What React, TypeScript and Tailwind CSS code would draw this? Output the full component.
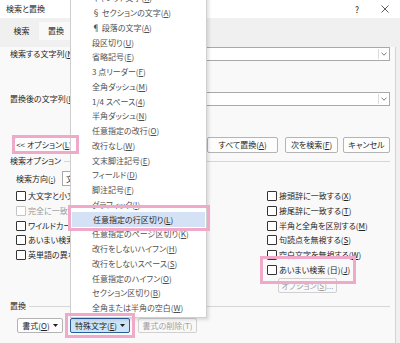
import React from "react";

type K = { t: string; k?: string; tail?: string };

const Lbl = ({ t, k, tail }: K) => (
  <span className="whitespace-nowrap">
    {t}
    {k !== undefined && (
      <>
        (<span className="underline underline-offset-[1px] decoration-[0.5px]">{k}</span>)
      </>
    )}
    {tail}
  </span>
);

const Chevron = () => (
  <svg width="6" height="4" viewBox="0 0 6 4" className="block">
    <path d="M0.5 0.8 L3 3.2 L5.5 0.8" fill="none" stroke="#555" strokeWidth="0.8" />
  </svg>
);

const Tri = () => (
  <svg width="5" height="3" viewBox="0 0 5 3" className="ml-[3px] block">
    <path d="M0 0 L5 0 L2.5 3 Z" fill="#222" />
  </svg>
);

const Combo = ({ cls, text }: { cls: string; text?: string }) => (
  <div className={"flex h-full items-center border border-[#a9a9a9] bg-white " + cls}>
    <div className="flex-1 pl-[3px]">{text}</div>
    <div className="mr-[1px] flex h-[10px] w-[10px] items-center justify-center border-l border-[#dcdcdc]">
      <Chevron />
    </div>
  </div>
);

const Check = ({ label, disabled }: { label: React.ReactNode; disabled?: boolean }) => (
  <div className={"flex h-[14.7px] items-center " + (disabled ? "text-[#9a9a9a]" : "")}>
    <div
      className={
        "mr-[2px] h-[10px] w-[10px] shrink-0 rounded-[1px] border bg-white " +
        (disabled ? "border-[#c4c4c4]" : "border-[#333]")
      }
    />
    {label}
  </div>
);

const Btn = ({ cls, children }: { cls: string; children: React.ReactNode }) => (
  <div
    className={
      "flex h-full items-center justify-center rounded-[2px] border border-[#b4b4b4] bg-[#fdfdfd] " + cls
    }
  >
    {children}
  </div>
);

const Group = ({ label }: { label: string }) => (
  <div className="flex h-[12px] items-center pl-[10px] pr-[5px]">
    <span>{label}</span>
    <div className="ml-[3px] h-px flex-1 bg-[#d6d6d6]" />
  </div>
);

const menuItems: K[] = [
  { t: "キャレット文字", k: "R" },
  { t: "§ セクションの文字", k: "A" },
  { t: "¶ 段落の文字", k: "A" },
  { t: "段区切り", k: "U" },
  { t: "省略記号", k: "E" },
  { t: "3 点リーダー", k: "F" },
  { t: "全角ダッシュ", k: "M" },
  { t: "1/4 スペース", k: "4" },
  { t: "半角ダッシュ", k: "N" },
  { t: "任意指定の改行", k: "O" },
  { t: "改行なし", k: "W" },
  { t: "文末脚注記号", k: "E" },
  { t: "フィールド", k: "D" },
  { t: "脚注記号", k: "F" },
  { t: "グラフィック", k: "I" },
  { t: "任意指定の行区切り", k: "L" },
  { t: "任意指定のページ区切り", k: "K" },
  { t: "改行をしないハイフン", k: "H" },
  { t: "改行をしないスペース", k: "S" },
  { t: "任意指定のハイフン", k: "O" },
  { t: "セクション区切り", k: "B" },
  { t: "全角または半角の空白", k: "W" },
];

const Pink = ({ cls }: { cls: string }) => (
  <div className={"pointer-events-none absolute border-[3px] border-[#f1a9c9] " + cls} />
);

export default function App() {
  return (
    <div className="relative h-[343px] w-[400px] overflow-hidden bg-[#f0f0f0] font-['Noto_Sans_CJK_JP',sans-serif] text-[8px] leading-none text-[#262626] [font-feature-settings:'palt']">
      {/* title bar */}
      <div className="flex h-[18px] items-center bg-white pl-[6px]">
        <span>検索と置換</span>
        <div className="ml-auto flex items-center pr-[11px]">
          <span className="text-[8.5px]">?</span>
          <svg width="8" height="8" viewBox="0 0 8 8" className="ml-[22px] block">
            <path d="M0.5 0.5 L7.5 7.5 M7.5 0.5 L0.5 7.5" stroke="#333" strokeWidth="0.8" />
          </svg>
        </div>
      </div>

      {/* tabs */}
      <div className="flex h-[22px] items-end pl-[4px]">
        <div className="flex h-[18px] w-[35px] items-center justify-center">検索</div>
        <div className="flex h-[18px] w-[34px] items-center justify-center bg-[#f9f9f9]">置換</div>
      </div>

      {/* content */}
      <div className="h-[303px] w-[396px] border-r border-[#d4d4d4] bg-[#f9f9f9]">
        <div className="mt-[7px] flex h-[14px] items-center pl-[10px] pr-[5px]">
          <span className="w-[75px]">
            <Lbl t="検索する文字列" k="N" tail=":" />
          </span>
          <Combo cls="flex-1" />
        </div>
        <div className="mt-[31px] flex h-[14px] items-center pl-[10px] pr-[5px]">
          <span className="w-[75px]">
            <Lbl t="置換後の文字列" k="I" tail=":" />
          </span>
          <Combo cls="flex-1" />
        </div>

        <div className="mt-[31px] flex h-[16px] items-center">
          <Btn cls="ml-[14px] w-[60px]">
            <Lbl t="<< オプション" k="L" />
          </Btn>
          <Btn cls="ml-[133px] w-[71px]">
            <Lbl t="すべて置換" k="A" />
          </Btn>
          <Btn cls="ml-[7px] w-[53px]">
            <Lbl t="次を検索" k="F" />
          </Btn>
          <Btn cls="ml-[5px] w-[47px]">キャンセル</Btn>
        </div>

        <div className="mt-[2px]">
          <Group label="検索オプション" />
        </div>

        <div className="mt-[4px] flex h-[15px] items-center pl-[16px]">
          <span className="w-[46px]">
            <Lbl t="検索方向" k=":" />
          </span>
          <Combo cls="w-[80px]" text="文書全体" />
        </div>

        <div className="mt-[3px] flex h-[104px]">
          <div className="w-[267px] shrink-0 pl-[16px]">
            <Check label={<Lbl t="大文字と小文字を区別する" k="H" />} />
            <Check disabled label={<Lbl t="完全に一致する単語だけを検索する" k="Y" />} />
            <Check label={<Lbl t="ワイルドカードを使用する" k="U" />} />
            <Check label={<Lbl t="あいまい検索 (英)" k="K" />} />
            <Check label={<Lbl t="英単語の異なる活用形も検索する" k="W" />} />
          </div>
          <div className="flex-1">
            <Check label={<Lbl t="接頭辞に一致する" k="X" />} />
            <Check label={<Lbl t="接尾辞に一致する" k="T" />} />
            <Check label={<Lbl t="半角と全角を区別する" k="M" />} />
            <Check label={<Lbl t="句読点を無視する" k="S" />} />
            <Check label={<Lbl t="空白文字を無視する" k="W" />} />
            <Check label={<Lbl t="あいまい検索 (日)" k="J" />} />
            <div className="mt-[1px] flex h-[15px]">
              <div className="ml-[11px] flex w-[59px] items-center justify-center rounded-[2px] border border-[#d0d0d0] text-[#a0a0a0]">
                <Lbl t="オプション" k="S" tail="..." />
              </div>
            </div>
          </div>
        </div>

        <div className="mt-[7px]">
          <Group label="置換" />
        </div>

        <div className="mt-[6px] flex h-[15px] items-center">
          <Btn cls="ml-[17px] w-[46px]">
            <Lbl t="書式" k="O" />
            <Tri />
          </Btn>
          <div className="ml-[7px] flex h-full w-[60px] items-center justify-center rounded-[2px] border border-[#2a5d9a] bg-[#cce4f7]">
            <Lbl t="特殊文字" k="E" />
            <Tri />
          </div>
          <div className="ml-[8px] flex h-full w-[59px] items-center justify-center rounded-[2px] border border-[#d0d0d0] text-[#a0a0a0]">
            書式の削除(T)
          </div>
        </div>
      </div>

      {/* dropdown menu */}
      <div className="absolute left-[70px] top-[-10px] w-[137px] border border-[#cfcfcf] bg-white pb-[1px] text-[#505050] shadow-[2px_2px_3px_rgba(0,0,0,0.12)]">
        {menuItems.map((m, i) => (
          <div
            key={i}
            className={
              "flex h-[14.75px] items-center pl-[21px] " + (i === 15 ? "mx-[1px] bg-[#d5e1f4] text-[#2a2a2a]" : "")
            }
          >
            <Lbl t={m.t} k={m.k} />
          </div>
        ))}
      </div>

      {/* annotation boxes */}
      <Pink cls="left-[12px] top-[135px] h-[19px] w-[67px]" />
      <Pink cls="left-[68px] top-[205px] h-[26px] w-[142px]" />
      <Pink cls="left-[260px] top-[256px] h-[28px] w-[96px]" />
      <Pink cls="left-[65px] top-[313px] h-[25px] w-[70px]" />
    </div>
  );
}
